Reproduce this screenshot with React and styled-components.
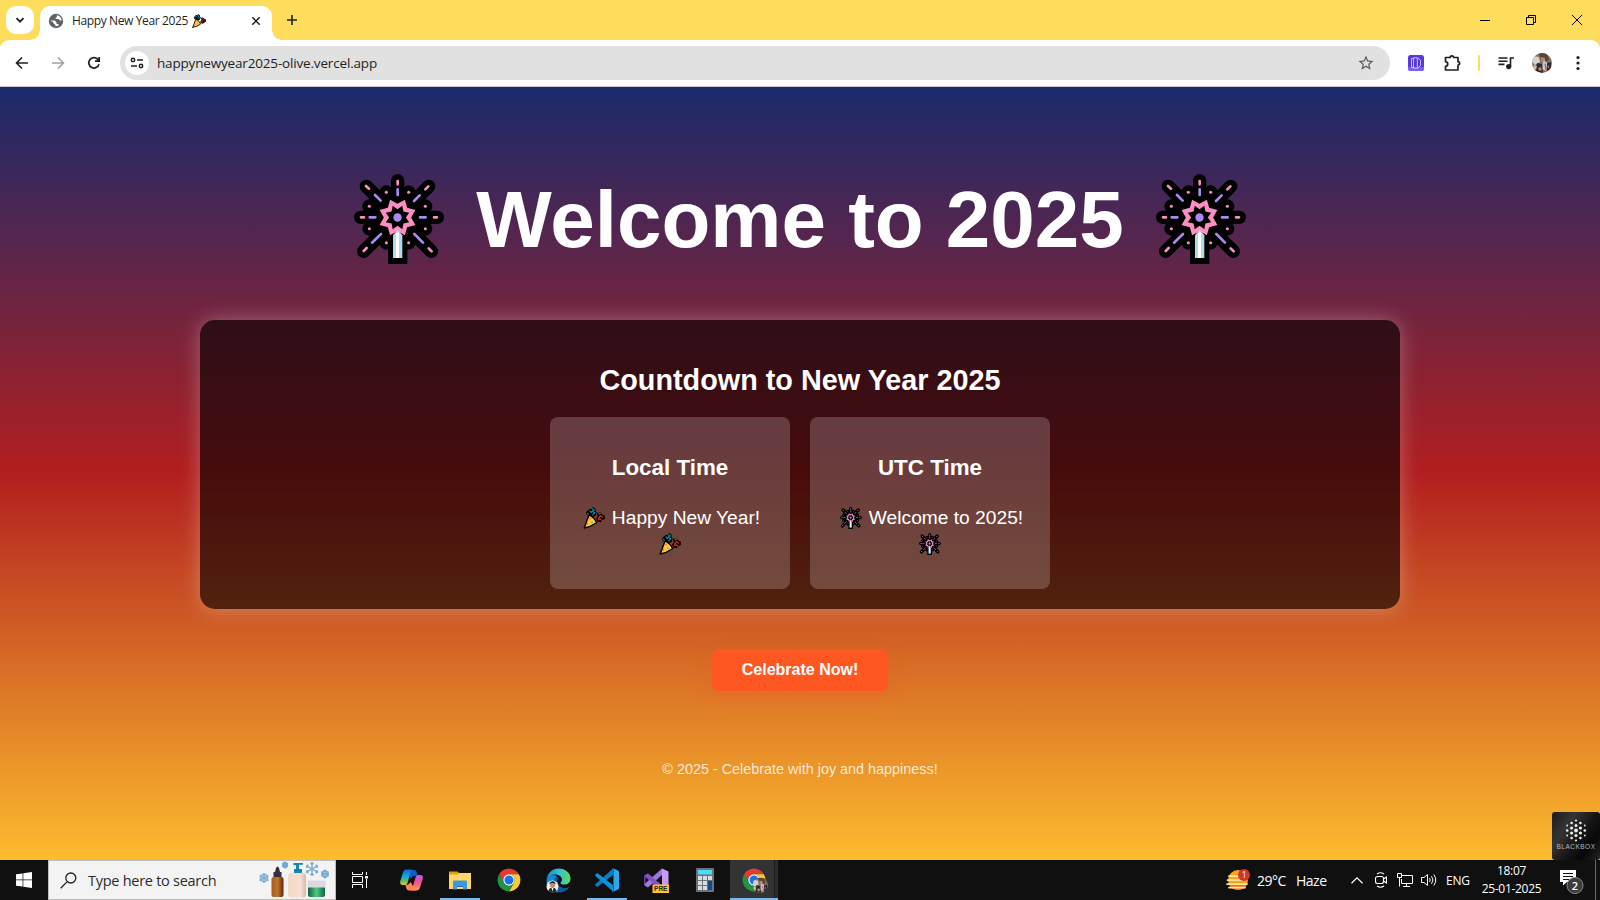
import React from "react";
import styled, { createGlobalStyle } from "styled-components";

const Global = createGlobalStyle`
  *, *::before, *::after { box-sizing: border-box; }
  body { margin: 0; overflow: hidden; }
  h1, h2, h3, p { margin: 0; }
  svg { display: block; flex: none; }
`;

const ui = `"Open Sans", "Noto Sans", sans-serif`;
const arial = `"Liberation Sans", Arial, sans-serif`;

const Screen = styled.div`
  width: 1600px;
  height: 900px;
  display: flex;
  flex-direction: column;
  overflow: hidden;
  background: #ffdd5c;
`;

/* ---------- browser chrome ---------- */
const TabStrip = styled.header`
  height: 40px;
  display: flex;
  align-items: flex-end;
  padding-left: 6px;
`;
const TabSearch = styled.button`
  width: 28px;
  height: 28px;
  margin: 0 6px 6px 0;
  padding: 0;
  border: 0;
  border-radius: 10px;
  background: #fff;
  display: grid;
  place-items: center;
`;
const Tab = styled.div`
  position: relative;
  width: 232px;
  height: 34px;
  padding: 0 8px 5px 8px;
  border-radius: 10px 10px 0 0;
  background: #fff;
  display: flex;
  align-items: center;
  &::before, &::after {
    content: "";
    position: absolute;
    bottom: 0;
    width: 10px;
    height: 10px;
  }
  &::before { left: -10px; background: radial-gradient(circle at 0 0, transparent 9.5px, #fff 10px); }
  &::after { right: -10px; background: radial-gradient(circle at 100% 0, transparent 9.5px, #fff 10px); }
`;
const TabTitle = styled.span`
  width: 120px;
  margin-left: 8px;
  font: 12px/16px ${ui};
  letter-spacing: -0.38px;
  white-space: nowrap;
  color: #1f1f1f;
`;
const TabClose = styled.div`
  margin-left: auto;
  width: 16px;
  height: 16px;
  display: grid;
  place-items: center;
`;
const NewTab = styled.div`
  width: 28px;
  height: 28px;
  margin: 0 0 6px 6px;
  display: grid;
  place-items: center;
`;
const WindowControls = styled.div`
  margin-left: auto;
  align-self: stretch;
  display: flex;
`;
const WindowButton = styled.div`
  width: 46px;
  height: 40px;
  display: grid;
  place-items: center;
`;
const Toolbar = styled.nav`
  height: 47px;
  flex: none;
  padding-left: 4px;
  display: flex;
  align-items: center;
  background: #fff;
  border-bottom: 1px solid #c9c9c9;
  border-radius: 9px 9px 0 0;
`;
const ToolSlot = styled.div`
  width: ${(p) => p.$w || 36}px;
  height: 34px;
  flex: none;
  display: grid;
  place-items: center;
`;
const Omnibox = styled.div`
  width: 1270px;
  height: 34px;
  margin: 0 8px;
  padding: 0 15px 0 5px;
  border-radius: 17px;
  background: #e1e1e1;
  display: flex;
  align-items: center;
`;
const SiteInfo = styled.div`
  width: 24px;
  height: 24px;
  border-radius: 50%;
  background: #fff;
  display: grid;
  place-items: center;
`;
const Url = styled.span`
  flex: 1;
  margin-left: 8px;
  font: 13.5px/20px ${ui};
  letter-spacing: -0.17px;
  color: #1f1f1f;
`;
const ProfileDivider = styled.div`
  width: 2px;
  height: 16px;
  border-radius: 1px;
  background: #ffdd5c;
`;

/* ---------- page ---------- */
const Page = styled.main`
  position: relative;
  height: 773px;
  flex: none;
  display: flex;
  flex-direction: column;
  align-items: center;
  background: linear-gradient(to bottom, #1a2a6c, #b21f1f, #fdbb2d);
  font-family: ${arial};
  color: #fff;
`;
const Title = styled.h1`
  margin-top: 87px;
  height: 90px;
  display: flex;
  align-items: center;
  gap: 32px;
  font-size: 80px;
  line-height: 90px;
  white-space: nowrap;
`;
const TitleText = styled.span`
  padding-top: 2px;
`;
const Countdown = styled.section`
  width: 1200px;
  height: 289px;
  margin-top: 56px;
  padding-top: 43px;
  border-radius: 15px;
  background: rgba(0, 0, 0, 0.6);
  box-shadow: 0 0 20px rgba(255, 255, 255, 0.3);
  display: flex;
  flex-direction: column;
  align-items: center;
`;
const CountdownTitle = styled.h2`
  font-size: 28.8px;
  line-height: 34px;
`;
const Timers = styled.div`
  margin-top: 20px;
  display: flex;
  gap: 20px;
`;
const Timer = styled.article`
  width: 240px;
  height: 172px;
  padding-top: 38px;
  border-radius: 8px;
  background: rgba(255, 255, 255, 0.2);
  display: flex;
  flex-direction: column;
  align-items: center;
`;
const TimerTitle = styled.h3`
  font-size: 22.4px;
  line-height: 26px;
`;
const TimerText = styled.p`
  margin-top: 24px;
  display: flex;
  flex-direction: column;
  align-items: center;
  font-size: 19.2px;
  line-height: 26px;
  white-space: nowrap;
`;
const TextLine = styled.span`
  height: 26px;
  display: flex;
  align-items: center;
  gap: 7px;
  &:first-child { padding-left: 3px; }
`;
const Celebrate = styled.button`
  width: 176px;
  height: 42px;
  margin-top: 40px;
  padding: 0;
  border: 0;
  border-radius: 8px;
  background: #ff5722;
  box-shadow: 0 5px 15px rgba(255, 87, 34, 0.4);
  color: #fff;
  font: bold 16px/42px ${arial};
`;
const Footer = styled.footer`
  margin-top: 68px;
  font-size: 14.4px;
  line-height: 20px;
  color: rgba(255, 255, 255, 0.8);
`;
const Blackbox = styled.aside`
  position: absolute;
  right: 0;
  bottom: 0;
  width: 48px;
  height: 48px;
  padding-top: 6px;
  border-radius: 3px;
  background: linear-gradient(125deg, #1b1b1b, #343434 30%, #161616 55%, #080808 75%, #232323);
  display: flex;
  flex-direction: column;
  align-items: center;
  color: #b9b9b9;
  font: 6.5px/8px ${arial};
  letter-spacing: 0.5px;
`;

/* ---------- taskbar ---------- */
const Taskbar = styled.footer`
  height: 40px;
  flex: none;
  display: flex;
  align-items: stretch;
  background: #101010;
  color: #fff;
  font-family: ${ui};
`;
const TaskSlot = styled.div`
  width: ${(p) => p.$w || 48}px;
  height: 40px;
  flex: none;
  display: grid;
  place-items: center;
`;
const SearchBox = styled.div`
  width: 288px;
  padding: 0 4px 0 11px;
  background: #f3f3f3;
  border: 1px solid #bdbdbd;
  display: flex;
  align-items: center;
  color: #2b2b2b;
  font-size: 14.5px;
  letter-spacing: -0.27px;
  white-space: nowrap;
`;
const SearchLabel = styled.span`
  flex: 1;
  margin-left: 11px;
`;
const Apps = styled.div`
  margin-left: 3px;
  display: flex;
  gap: 1px;
`;
const AppButton = styled.div`
  width: 48px;
  height: 40px;
  display: flex;
  flex-direction: column;
  align-items: center;
  justify-content: space-between;
  background: ${(p) => (p.$active ? "linear-gradient(to right, #333 44px, #1c1c1c 44px, #1c1c1c 45px, #2c2c2c 45px)" : "none")};
  &::after {
    content: "";
    width: ${(p) => (p.$active ? 48 : 40)}px;
    height: 2px;
    background: ${(p) => (p.$open ? "#76b9ed" : "transparent")};
  }
`;
const AppIcon = styled.div`
  height: 38px;
  padding-top: 2px;
  display: grid;
  place-items: center;
`;
const Tray = styled.div`
  margin-left: auto;
  display: flex;
  align-items: center;
`;
const Weather = styled.div`
  width: 119px;
  display: flex;
  align-items: center;
  font-size: 14px;
  letter-spacing: -0.5px;
  white-space: nowrap;
`;
const Temperature = styled.span`
  width: 30px;
  margin: 0 9px 0 7px;
`;
const Language = styled.span`
  width: 29px;
  padding-left: 5px;
  font-size: 12px;
  letter-spacing: -0.2px;
`;
const Clock = styled.div`
  width: 83px;
  text-align: center;
  font-size: 12px;
  line-height: 18px;
  letter-spacing: -0.3px;
  white-space: nowrap;
`;
const NotificationSlot = styled(TaskSlot)`
  padding: 2px 6px 0 0;
`;
const ShowDesktop = styled.div`
  width: 5px;
  height: 40px;
  border-left: 1px solid #6a6a6a;
`;

/* ---------- drawings ---------- */
const star = (R, r) =>
  Array.from({ length: 16 }, (_, i) => {
    const a = (i * Math.PI) / 8;
    const d = i % 2 ? R : r;
    return `${(130.5 + d * Math.sin(a)).toFixed(1)},${(130.5 - d * Math.cos(a)).toFixed(1)}`;
  }).join(" ");

const SPARKS = [[97, 55], [164, 55], [46, 97], [214, 97], [46, 164], [214, 164], [97, 206], [164, 206]];

function Sparkler({ size }) {
  return (
    <svg width={size} height={size} viewBox="0 0 270 270">
      <g stroke="#000" strokeWidth="40" strokeLinecap="round">
        <path d="M131 20V130M20 130H250M37 37L131 131M224 37L131 131M29 232L131 131M232 232L131 131" />
      </g>
      <circle cx="130.5" cy="130.5" r="76" />
      {SPARKS.map(([x, y]) => <circle key={`b${x}-${y}`} cx={x} cy={y} r="21" />)}
      <path d="M102 165H160V270H102z" />
      <g strokeLinecap="round" strokeWidth="8" fill="none">
        <path stroke="#fc8fc0" d="M131 21v10M21 130h9M240 130h9M36 36l9 8M223 37l-9 9M29 231l9-9M224 223l9 9" />
        <path stroke="#a78bf5" d="M131 46v17M47 130h17M198 130h17M63 63l17 17M197 64l-17 17M54 206l27-26M181 180l26 26" />
      </g>
      {SPARKS.map(([x, y]) => <circle key={`p${x}-${y}`} cx={x} cy={y} r="4.6" fill="#fc8fc0" />)}
      <polygon points={star(58, 41)} fill="#fc8fc0" />
      <polygon points={star(38, 25)} />
      <circle cx="130.5" cy="130.5" r="12.5" fill="#a78bf5" />
      <path fill="#b1d9f0" d="M117 184l14-17 14 17v68h-28z" />
      <path fill="#fff" d="M126 176h9v76h-9z" />
    </svg>
  );
}

function Popper({ size }) {
  return (
    <svg width={size} height={size} viewBox="0 0 63 64" strokeLinejoin="round" strokeLinecap="round">
      <path d="M20 7l6 2 3-7 5 4v6l3 4-2 8-8 4-7-5-8-1-2-6z" stroke="#000" strokeWidth="4" />
      <path d="M40 34l5-8-3-7 8-1 5 6 6 2v8l-7 3-3 5-8-1z" stroke="#000" strokeWidth="4" />
      <path d="M27 5l5 3-6 5 8 3-6 7M20 11l4 5" fill="none" stroke="#0891a8" strokeWidth="3.500" />
      <path d="M45 32l5-7 6 4M44 36l6-1 3 3" fill="none" stroke="#c92313" strokeWidth="4.500" />
      <path d="M12 18l4 4M46 20l4-1" stroke="#8b62d9" strokeWidth="3" />
      <path d="M3 61L17 23Q34 32 39 46Q22 58 3 61z" fill="#ffc83d" stroke="#000" strokeWidth="4" />
      <path d="M20 33l1 1M12 50l1-1" stroke="#ef6b3c" strokeWidth="4" />
      <path d="M25 44l1 1" stroke="#35b7b1" strokeWidth="4" />
    </svg>
  );
}

function Avatar({ size }) {
  return (
    <svg width={size} height={size} viewBox="0 0 20 20">
      <defs><clipPath id={`av${size}`}><circle cx="10" cy="10" r="10" /></clipPath></defs>
      <g clipPath={`url(#av${size})`}>
        <path fill="#85705f" d="M0 0h20v20H0z" />
        <path fill="#d8d0c9" d="M1 3l6 1 1 5-5 3-3-3z" />
        <path fill="#5b4636" d="M7 0h8l2 7-4 2-4-2z" />
        <path fill="#b78666" d="M9 4l4 1v4l-4-1z" />
        <path fill="#cfc8cb" d="M11 8l4 2-1 8-4-2z" />
        <path fill="#a9c5df" d="M12 7l3 3-1 5-3-3z" />
        <path fill="#2e2839" d="M5 10l5 1 1 9-8-2zM15 10l4-1v10l-4-1z" />
        <path stroke="#bd4a45" d="M13 11l1 6" />
        <path fill="#b68b3f" d="M6 15l3-1 1 3-3 1zM15 14l2-2v3z" />
        <path fill="#cbb9aa" d="M2 12l3 1-1 4-3-2z" />
      </g>
    </svg>
  );
}

function ChromeLogo({ size = 25, badge }) {
  return (
    <svg width={size + 2} height={size + 2} viewBox="0 0 52 52">
      <path fill="#e33b2e" d="M4.95 13A22 22 0 0 1 43.05 13H24A11 11 0 0 0 14.47 29.5z" transform="translate(1 1)" />
      <path fill="#fcc934" d="M43.05 13A22 22 0 0 1 24 46L33.53 29.5A11 11 0 0 0 24 13z" transform="translate(1 1)" />
      <path fill="#229342" d="M24 46A22 22 0 0 1 4.95 13L14.47 29.5A11 11 0 0 0 33.53 29.5z" transform="translate(1 1)" />
      <circle cx="25" cy="25" r="11" fill="#fff" />
      <circle cx="25" cy="25" r="8.7" fill="#1a73e8" />
      {badge && <svg x="22" y="20" width="30" height="30" viewBox="0 0 16 16"><Avatar size={16} /></svg>}
    </svg>
  );
}

const Line = ({ w = 16, h = 16, box = "0 0 16 16", d, color = "#1f1f1f", sw = 1.6, ...rest }) => (
  <svg width={w} height={h} viewBox={box} fill="none" stroke={color} strokeWidth={sw} {...rest}><path d={d} /></svg>
);

const Globe = () => (
  <svg width="16" height="16" viewBox="0 0 16 16">
    <circle cx="8" cy="8" r="7.2" fill="#5f6368" />
    <path fill="#fff" d="M8.8 2.2c2.7.4 4.8 2.5 5 5.2H12l-1.4-1.3H7.7V4.4h1.1zM2.2 7.5h4.3l2 1.8v1.6h1.6l.8 1.2c-1 1-2.4 1.3-3.5 1.1V12L5.2 10V8.9z" />
  </svg>
);

const Copilot = () => (
  <svg width="23" height="22" viewBox="0 0 46 44">
    <defs>
      <linearGradient id="cpA" x1="0" y1="0" x2="0" y2="1"><stop offset="0" stopColor="#1266d4" /><stop offset=".45" stopColor="#13a9dc" /><stop offset=".75" stopColor="#62bd59" /><stop offset="1" stopColor="#f3cf20" /></linearGradient>
      <linearGradient id="cpB" x1="0" y1="0" x2="0" y2="1"><stop offset="0" stopColor="#b45cf0" /><stop offset=".45" stopColor="#f0508d" /><stop offset="1" stopColor="#ff9a55" /></linearGradient>
    </defs>
    <path fill="#1657c8" d="M14 2h14c4 0 5 3 6 6l2 6h-7c-4 0-5 2-7 6z" />
    <path fill="url(#cpA)" d="M13 1h12c-3 1-4 5-5 9l-5 18c-1 3-3 4-6 4H5c-4 0-6-4-4-9L6 7c1-4 3-6 7-6z" />
    <path fill="url(#cpB)" d="M33 43H21c3-1 4-5 5-9l5-17c1-3 3-5 6-5h4c4 0 6 4 4 9l-5 16c-1 4-3 6-7 6z" />
    <path fill="#ff815e" d="M32 43H18c-4 0-5-3-6-6l-1-5c5 0 8-2 10-6l5 8z" />
  </svg>
);

const Folder = () => (
  <svg width="22" height="19" viewBox="0 0 44 38">
    <path fill="#e7a00d" d="M0 1h17l4 4v6H0z" />
    <path fill="#ffd766" d="M0 7h17l4-3h23v32H0z" />
    <path fill="#3c97dc" d="M8 37V21c0-1 1-2 2-2h24c1 0 2 1 2 2v16h-8v-8H16v8z" />
    <path fill="#256fae" d="M16 29h12v3H16z" />
  </svg>
);

const Edge = () => (
  <svg width="25" height="25" viewBox="0 0 50 50">
    <defs>
      <linearGradient id="edA" x1="0" x2="1"><stop offset="0" stopColor="#1489d8" /><stop offset=".55" stopColor="#35c1d1" /><stop offset="1" stopColor="#60db56" /></linearGradient>
    </defs>
    <path fill="#0c59a4" d="M4 16C-2 36 12 49 27 49c9 0 16-5 20-11-9 4-21 2-24-8-1-5 0-8 2-10C16 12 6 12 4 16z" />
    <path fill="#1489d8" d="M1 26C2 16 14 12 22 16c-8 6-10 20 4 32C11 50 0 40 1 26z" />
    <path fill="url(#edA)" d="M1 23C4 8 14 1 25 1c14 0 24 9 24 20 0 8-6 12-12 12-5 0-8-1-8-3 0-1 3-3 3-7 0-5-6-10-14-10C10 13 4 17 1 23z" />
    <circle cx="13" cy="37" r="12" fill="#f1ede9" />
    <path fill="#202b34" d="M5 46c1-6 4-7 8-7s7 2 8 7c-5 4-12 4-16 0z" />
    <circle cx="13" cy="34" r="5" fill="#bd8d70" />
    <path fill="#201b1a" d="M7 33c-1-8 13-9 12 0l-3-3H10z" />
    <path fill="#fff" d="M11 40h4l-2 7z" />
  </svg>
);

const VsCode = () => (
  <svg width="24" height="24" viewBox="0 0 48 48">
    <path fill="#0a7cc4" d="M36 1v13L6 37c-1 1-2 1-3 0l-2-2c-1-1-1-2 0-3z" />
    <path fill="#1190d9" d="M36 47V34L6 11c-1-1-2-1-3 0l-2 2c-1 1-1 2 0 3z" />
    <path fill="#29a9f2" d="M34 1c1-1 2-1 3 0l9 4c1 1 2 2 2 3v32c0 1-1 2-2 3l-9 4c-1 1-2 1-3 0 2 0 3-1 3-3V4c0-2-1-3-3-3z" />
  </svg>
);

const VisualStudio = () => (
  <svg width="25" height="25" viewBox="0 0 50 50">
    <path fill="#6a3ba7" d="M2 14l6-3 28 24v12L3 19v15l-3-2V16z" />
    <path fill="#a276dc" d="M36 1v13L8 39l-7-4v-3z" />
    <path fill="#8352c6" d="M1 15l7-4 28 24v11z" />
    <path fill="#c79bf5" d="M36 1l13 6v35l-13 6z" />
    <path fill="#ffc32b" d="M17 33h33v17H17z" />
    <text x="33.5" y="46" textAnchor="middle" fontFamily="Liberation Sans, sans-serif" fontWeight="bold" fontSize="13" fill="#2b2410">PRE</text>
  </svg>
);

const Calculator = () => (
  <svg width="18" height="24" viewBox="0 0 36 48">
    <rect width="36" height="48" rx="2" fill="#68737c" />
    <path fill="#4ddcf5" d="M4 4h28v9H4z" />
    <path fill="#d9dde0" d="M4 16h8v8H4zM14 16h8v8h-8zM24 16h8v8h-8zM4 26h8v8H4zM14 26h8v8h-8zM4 36h8v8H4zM14 36h8v8h-8z" />
    <path fill="#114a8b" d="M24 26h8v18h-8z" />
  </svg>
);

const FLAKES = [[5, 17, 5], [26, 4, 3.5], [53, 8, 7], [66, 13, 4.5]];
const Skincare = () => (
  <svg width="72" height="38" viewBox="0 0 72 38">
    <defs>
      <linearGradient id="skA"><stop offset="0" stopColor="#a85c20" /><stop offset=".5" stopColor="#c3732f" /><stop offset="1" stopColor="#5e2908" /></linearGradient>
      <linearGradient id="skB"><stop offset="0" stopColor="#f4d9c7" /><stop offset=".7" stopColor="#f4dfd2" /><stop offset="1" stopColor="#dab8a3" /></linearGradient>
      <linearGradient id="skC"><stop offset="0" stopColor="#145d42" /><stop offset=".5" stopColor="#4ccb82" /><stop offset="1" stopColor="#146044" /></linearGradient>
    </defs>
    {FLAKES.map(([x, y, r]) => (
      <g key={x} stroke="#76a9ca" strokeWidth="1.3" transform={`translate(${x} ${y})`}>
        {[0, 60, 120].map((a) => <path key={a} transform={`rotate(${a})`} d={`M0 ${-r}V${r}M-1.6 ${-r + 1}l1.6 1.6 1.6-1.6M-1.6 ${r - 1}L0 ${r - 2.6} 1.6 ${r - 1}`} fill="none" />)}
      </g>
    ))}
    <path fill="#352d3b" d="M17 7q1.500-3 3 0l1 4h1.500v5h-8v-5H16z" />
    <rect x="12.500" y="16" width="12" height="20" rx="2" fill="url(#skA)" />
    <path fill="#1587ad" d="M34.500 2h9.500V3.800h-4V8h3v4.500h-8V8h2V4.200h-2.500z" />
    <rect x="29" y="12" width="18" height="24.500" rx="3" fill="url(#skB)" />
    <rect x="49" y="25" width="17" height="11" rx="2" fill="url(#skC)" />
    <rect x="48.500" y="19.500" width="18" height="7" rx="1" fill="#d9d9df" />
  </svg>
);

const WeatherIcon = () => (
  <svg width="24" height="22" viewBox="0 0 48 44">
    <circle cx="24" cy="22" r="20" fill="#f9a51b" />
    <path fill="#ec7413" d="M5 28h38c-3 10-11 14-19 14S8 38 5 28z" />
    <path stroke="#ffe2a0" strokeWidth="3.500" strokeLinecap="round" d="M6 14h26M3 22h34M2 30h40M6 37h32" />
    <circle cx="36" cy="12" r="12" fill="#d13428" />
    <text x="36" y="18" textAnchor="middle" fontFamily="Open Sans, sans-serif" fontSize="17" fill="#fff">1</text>
  </svg>
);

const DOTS = [[0, -10, 1.1], [0, -5, 1.5], [0, 0, 1.9], [0, 5, 1.6], [0, 10, 1.1],
  [4.4, -7.5, 1.3], [4.4, -2.5, 1.6], [4.4, 2.5, 1.6], [4.4, 7.5, 1.3],
  [8.8, -5, 0.9], [8.8, 0, 1.3], [8.8, 5, 0.9]];
const BlackboxDots = () => (
  <svg width="24" height="25" viewBox="-12 -12.5 24 25" fill="#eee">
    {DOTS.map(([x, y, r]) => (
      <g key={`${x}/${y}`}>
        <circle cx={x} cy={y} r={r} />
        {x > 0 && <circle cx={-x} cy={y} r={r} />}
      </g>
    ))}
  </svg>
);

const Notification = () => (
  <svg width="25" height="26" viewBox="0 0 25 26">
    <path fill="#fff" d="M1 2h16v12H8l-4 3.500V14H1z" />
    <path stroke="#101010" d="M4 5.500h10M4 8.500h10M4 11.500h6" />
    <circle cx="16" cy="17.500" r="8" fill="#3b3b3b" stroke="#8a8a8a" />
    <text x="16" y="21.500" textAnchor="middle" fontFamily="Open Sans, sans-serif" fontWeight="600" fontSize="11" fill="#fff">2</text>
  </svg>
);

const APPS = [
  { id: "copilot", icon: <Copilot /> },
  { id: "files", icon: <Folder />, open: true },
  { id: "chrome", icon: <ChromeLogo /> },
  { id: "edge", icon: <Edge /> },
  { id: "code", icon: <VsCode />, open: true },
  { id: "vs", icon: <VisualStudio /> },
  { id: "calc", icon: <Calculator /> },
  { id: "chrome-profile", icon: <ChromeLogo badge />, open: true, active: true },
];

export default function App() {
  return (
    <Screen>
      <Global />
      <TabStrip>
        <TabSearch><Line w={10} h={10} box="0 0 10 10" d="M1.500 3.200L5 6.700l3.500-3.500" sw={1.8} /></TabSearch>
        <Tab>
          <Globe />
          <TabTitle>Happy New Year 2025</TabTitle>
          <Popper size={14} />
          <TabClose><Line w={10} h={10} box="0 0 10 10" d="M1.300 1.300l7.400 7.400M8.700 1.300L1.300 8.700" sw={1.5} /></TabClose>
        </Tab>
        <NewTab><Line w={12} h={12} box="0 0 12 12" d="M6 1v10M1 6h10" sw={1.6} /></NewTab>
        <WindowControls>
          <WindowButton><Line w={10} h={10} box="0 0 10 10" d="M0 5.500h10" sw={1} color="#000" /></WindowButton>
          <WindowButton><Line w={10} h={10} box="0 0 10 10" d="M.5 2.500h7v7h-7zM2.500 2.500v-2h7v7h-2" sw={1} color="#000" /></WindowButton>
          <WindowButton><Line w={10} h={10} box="0 0 10 10" d="M0 0l10 10M10 0L0 10" sw={1} color="#000" /></WindowButton>
        </WindowControls>
      </TabStrip>

      <Toolbar>
        <ToolSlot><Line d="M14 8H3M8 2.500L2.500 8 8 13.500" /></ToolSlot>
        <ToolSlot><Line d="M2 8h11M8 2.500L13.500 8 8 13.500" color="#a3a3a3" /></ToolSlot>
        <ToolSlot><Line d="M13 9.200A5.200 5.200 0 1 1 11.800 4.300L13.200 5.700M13.200 2v4.200H9" sw={1.7} /></ToolSlot>
        <Omnibox>
          <SiteInfo>
            <svg width="14" height="12" viewBox="0 0 14 12" fill="none" stroke="#1f1f1f" strokeWidth="1.500">
              <circle cx="3" cy="3" r="1.700" /><path d="M7 3h6M1 9h6" /><circle cx="11" cy="9" r="1.700" />
            </svg>
          </SiteInfo>
          <Url>happynewyear2025-olive.vercel.app</Url>
          <svg width="18" height="18" viewBox="0 0 24 24" fill="#5a5a5a">
            <path d="M22 9.240l-7.190-.62L12 2 9.190 8.630 2 9.240l5.460 4.730L5.820 21 12 17.270 18.180 21l-1.630-7.030L22 9.240zM12 15.400l-3.760 2.270 1-4.280-3.320-2.880 4.380-.38L12 6.100l1.710 4.040 4.380.38-3.320 2.880 1 4.280L12 15.400z" />
          </svg>
        </Omnibox>
        <ToolSlot>
          <svg width="16" height="16" viewBox="0 0 16 16">
            <rect width="16" height="16" rx="2.500" fill="#5b35e8" /><path fill="#8b6df5" opacity=".7" d="M0 12h16v1.500a2.500 2.500 0 0 1-2.500 2.500h-11A2.500 2.500 0 0 1 0 13.500z" />
            <path fill="none" stroke="#d8ceff" strokeWidth=".9" d="M5.500 3.500h-2v9h2M5.500 2.800h4l3 2.500v5.400l-3 2.500h-4zM9.300 3v10" />
          </svg>
        </ToolSlot>
        <ToolSlot><Line w={18} h={18} box="0 0 18 18" sw={1.7} strokeLinejoin="round" d="M2.500 3.500H7.200a1.700 1.700 0 0 1 3.400 0H15v4.200a1.500 1.500 0 0 1 0 3.300V16H2.500v-3.600c3-.6 3-4.200 0-4.800z" /></ToolSlot>
        <ToolSlot $w={18}><ProfileDivider /></ToolSlot>
        <ToolSlot>
          <svg width="16" height="14" viewBox="0 0 16 14">
            <path fill="none" stroke="#1f1f1f" strokeWidth="1.600" d="M.5 2h9M.5 5.200h9M.5 8.400h6M12.500 10.500V2H16" /><circle cx="10.700" cy="10.600" r="2.600" fill="#1f1f1f" />
          </svg>
        </ToolSlot>
        <ToolSlot><Avatar size={20} /></ToolSlot>
        <ToolSlot><svg width="4" height="16" viewBox="0 0 4 16" fill="#1f1f1f"><circle cx="2" cy="2.500" r="1.600" /><circle cx="2" cy="8" r="1.600" /><circle cx="2" cy="13.500" r="1.600" /></svg></ToolSlot>
      </Toolbar>

      <Page>
        <Title><Sparkler size={90} /><TitleText>Welcome to 2025</TitleText><Sparkler size={90} /></Title>
        <Countdown>
          <CountdownTitle>Countdown to New Year 2025</CountdownTitle>
          <Timers>
            <Timer>
              <TimerTitle>Local Time</TimerTitle>
              <TimerText>
                <TextLine><Popper size={22} />Happy New Year!</TextLine>
                <TextLine><Popper size={22} /></TextLine>
              </TimerText>
            </Timer>
            <Timer>
              <TimerTitle>UTC Time</TimerTitle>
              <TimerText>
                <TextLine><Sparkler size={22} />Welcome to 2025!</TextLine>
                <TextLine><Sparkler size={22} /></TextLine>
              </TimerText>
            </Timer>
          </Timers>
        </Countdown>
        <Celebrate>Celebrate Now!</Celebrate>
        <Footer>© 2025 - Celebrate with joy and happiness!</Footer>
        <Blackbox><BlackboxDots />BLACKBOX</Blackbox>
      </Page>

      <Taskbar>
        <TaskSlot>
          <svg width="16" height="16" viewBox="0 0 16 16" fill="#fff"><path d="M0 2.300l6.600-.9v6.200H0zM7.300 1.300L16 0v7.600H7.300zM0 8.300h6.600v6.300L0 13.700zM7.300 8.300H16V16l-8.700-1.300z" /></svg>
        </TaskSlot>
        <SearchBox>
          <Line w={17} h={17} box="0 0 17 17" d="M15.800 6a5 5 0 1 1-10 0 5 5 0 0 1 10 0zM7.200 9.600L.7 16.200" sw={1.3} color="#222" />
          <SearchLabel>Type here to search</SearchLabel>
          <Skincare />
        </SearchBox>
        <TaskSlot>
          <svg width="17" height="16" viewBox="0 0 17 16" fill="none" stroke="#fff">
            <path d="M.5 0v2.500h10V0M.5 4.500h10v6H.5zM.5 16v-3.500h10V16M14.500 0v3M14.500 7v9" /><path fill="#fff" stroke="none" d="M13 4h3v2.500h-3z" />
          </svg>
        </TaskSlot>
        <Apps>
          {APPS.map((a) => (
            <AppButton key={a.id} $open={a.open} $active={a.active}><AppIcon>{a.icon}</AppIcon></AppButton>
          ))}
        </Apps>
        <Tray>
          <Weather><WeatherIcon /><Temperature>29°C</Temperature><span>Haze</span></Weather>
          <TaskSlot $w={24}><Line w={12} h={7} box="0 0 12 7" d="M.5 6.300L6 .9l5.500 5.400" sw={1.2} color="#fff" /></TaskSlot>
          <TaskSlot $w={24}><Line w={12} h={16} box="0 0 12 16" d="M2.500 4.500h4a2 2 0 0 1 2 2v3a2 2 0 0 1-2 2h-4a2 2 0 0 1-2-2v-3a2 2 0 0 1 2-2zM8.500 7l3-2v6l-3-2M2 2Q5.500-.5 9 2M2 14q3.500 2.500 7 0" sw={1.1} color="#fff" /></TaskSlot>
          <TaskSlot $w={24}><Line w={16} h={14} box="0 0 16 14" d="M5 2.500h10.500v8H4.500V6M.5.5h4v4h-4zM2.500 4.500v9M9.500 10.500v3M6 13.500h7" sw={1} color="#fff" /></TaskSlot>
          <TaskSlot $w={24}><Line w={17} h={14} box="0 0 17 14" d="M.5 4.500H3L6.500 1.500v11L3 9.500H.5zM8.500 5q1.500 2 0 4M10.500 3.200q3 3.800 0 7.600M12.800 1.500q4 5.500 0 11" sw={1} color="#fff" /></TaskSlot>
          <Language>ENG</Language>
          <Clock>18:07<br />25-01-2025</Clock>
          <NotificationSlot $w={42}><Notification /></NotificationSlot>
          <ShowDesktop />
        </Tray>
      </Taskbar>
    </Screen>
  );
}
